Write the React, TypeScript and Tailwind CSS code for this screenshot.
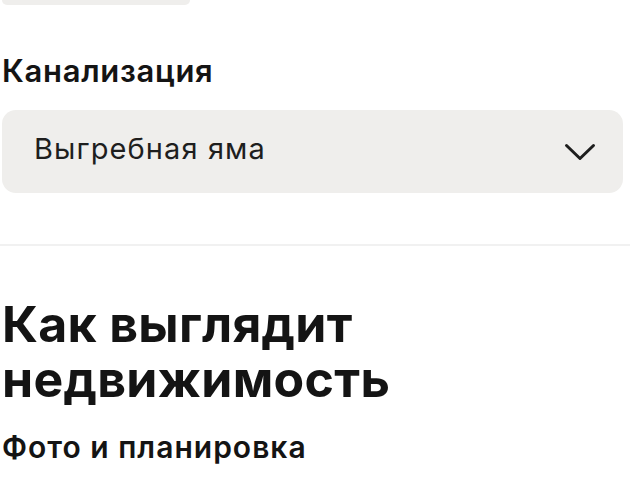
export default function App() {
  return (
    <div className="min-h-[479px] w-[640px] overflow-hidden bg-white font-['Inter','Noto_Sans',sans-serif] text-[#141414]">
      <div className="pl-[2px] pr-[17px]">
        <div className="h-[5px] w-[188px] rounded-b-[12px] bg-[#efeeec]" />

        <label className="mt-[48px] block text-[31px] font-semibold leading-[36px] tracking-[0.7px]">
          Канализация
        </label>

        <button
          type="button"
          className="mt-[21px] flex h-[83px] w-full items-center justify-between rounded-[14px] bg-[#efeeec] pl-[32px] pr-[27px] text-left"
        >
          <span className="mb-[6px] text-[29px] leading-[35px] tracking-[1.1px] text-[#1e1e1e]">Выгребная яма</span>
          <svg width="32" height="20" viewBox="0 0 32 20" fill="none" className="text-[#1e1e1e]">
            <path d="M2.5 3.5L16 16.5L29.5 3.5" stroke="currentColor" strokeWidth="3" strokeLinecap="round" strokeLinejoin="round" />
          </svg>
        </button>
      </div>

      <div className="mt-[51px] mr-[10px] h-[2px] bg-[#f1f1f1]" />

      <div className="pl-[2px] pr-[17px]">
        <h2 className="mt-[51px] text-[50px] font-bold leading-[55px] tracking-[0.3px]">
          Как выглядит
          <br />
          недвижимость
        </h2>
        <p className="mt-[22px] text-[30px] font-semibold leading-[36px] tracking-[1px]">Фото и планировка</p>
      </div>
    </div>
  );
}
